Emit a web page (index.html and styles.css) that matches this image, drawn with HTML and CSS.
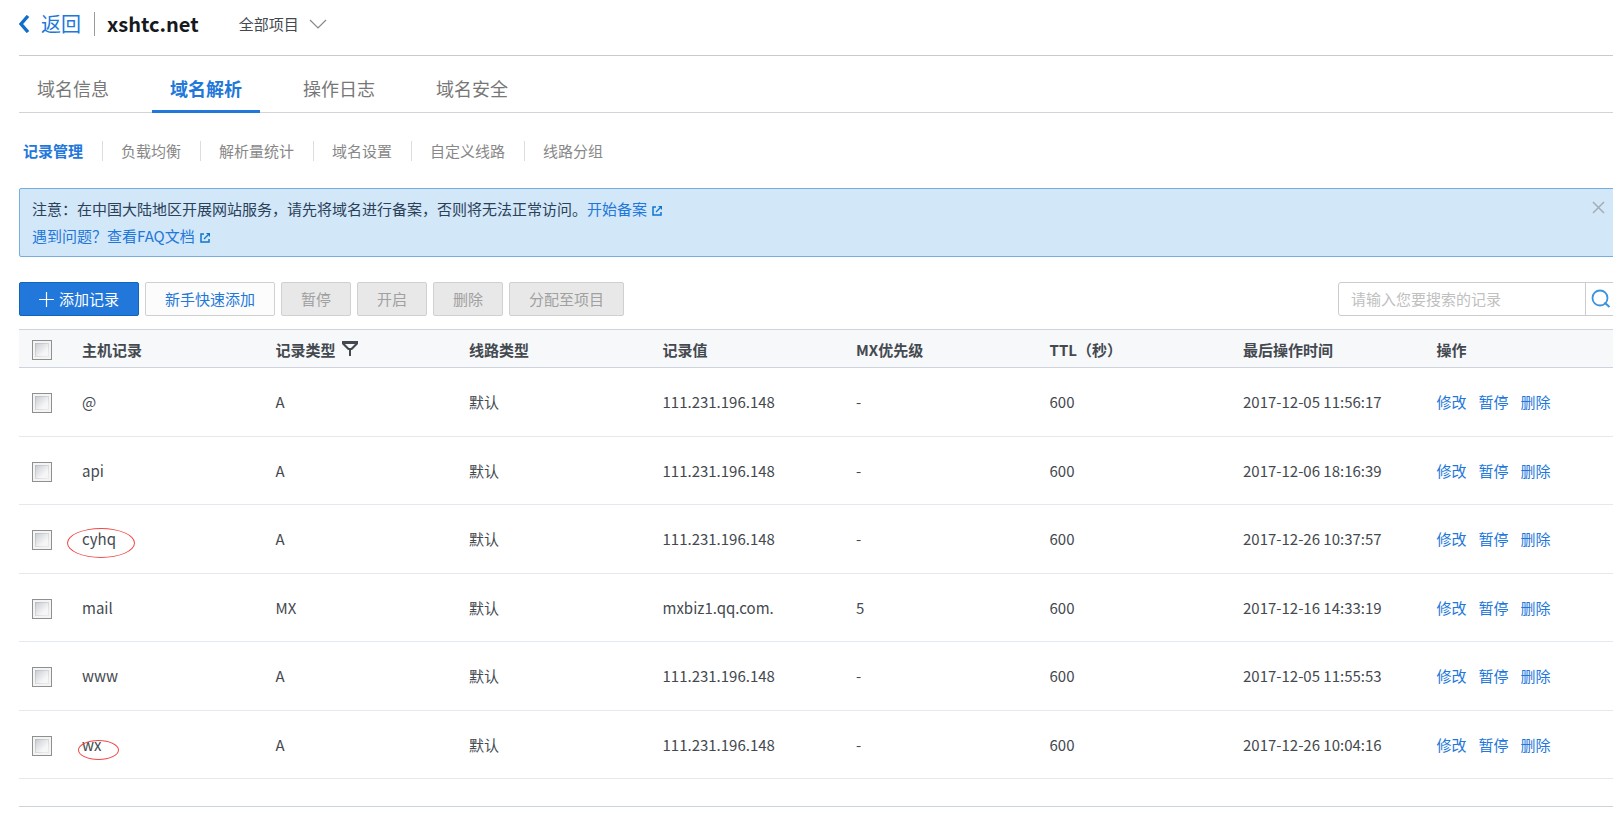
FILE: index.html
```html
<!DOCTYPE html>
<html lang="zh-CN">
<head>
    <meta charset="UTF-8">
    <meta name="viewport" content="width=device-width, initial-scale=1.0">
    <title>xshtc.net - 域名解析</title>
    <link rel="stylesheet" href="styles.css">
</head>
<body>
    <div class="page">
        <header class="header">
            <a href="#" class="back">
                <svg width="11" height="18" viewBox="0 0 11 18"><path d="M9 1L2 9l7 8" fill="none" stroke="#0f70cb" stroke-width="3.4"/></svg>
                返回
            </a>
            <h1>xshtc.net</h1>
            <button type="button" class="project">
                全部项目
                <svg width="18" height="10" viewBox="0 0 18 10"><path d="M1 1l8 8 8-8" fill="none" stroke="#888" stroke-width="1.2"/></svg>
            </button>
        </header>

        <nav class="tabs">
            <a href="#">域名信息</a>
            <a href="#" class="active">域名解析</a>
            <a href="#">操作日志</a>
            <a href="#">域名安全</a>
        </nav>

        <nav class="subnav">
            <a href="#" class="active">记录管理</a>
            <a href="#">负载均衡</a>
            <a href="#">解析量统计</a>
            <a href="#">域名设置</a>
            <a href="#">自定义线路</a>
            <a href="#">线路分组</a>
        </nav>

        <div class="notice">
            <div>
                <p>注意：在中国大陆地区开展网站服务，请先将域名进行备案，否则将无法正常访问。<a href="#">开始备案 <svg class="ext" width="10" height="10" viewBox="0 0 10 10"><path d="M4 1H1v8h8V6" fill="none" stroke="#0f76d0" stroke-width="1.5"/><path d="M6 0h4v4z" fill="#0f76d0"/><path d="M8 2L4 6" stroke="#0f76d0" stroke-width="1.2"/></svg></a></p>
                <p><a href="#">遇到问题？查看FAQ文档 <svg class="ext" width="10" height="10" viewBox="0 0 10 10"><path d="M4 1H1v8h8V6" fill="none" stroke="#0f76d0" stroke-width="1.5"/><path d="M6 0h4v4z" fill="#0f76d0"/><path d="M8 2L4 6" stroke="#0f76d0" stroke-width="1.2"/></svg></a></p>
            </div>
            <button type="button" class="close" aria-label="关闭">
                <svg width="13" height="13" viewBox="0 0 13 13"><path d="M1 1l11 11M12 1L1 12" fill="none" stroke="#a2adb6" stroke-width="1.5"/></svg>
            </button>
        </div>

        <div class="toolbar">
            <button type="button" class="btn primary">
                <svg width="15" height="15" viewBox="0 0 15 15"><path d="M7.5 0v15M0 7.5h15" fill="none" stroke="#fff" stroke-width="1.2"/></svg>
                添加记录
            </button>
            <button type="button" class="btn">新手快速添加</button>
            <button type="button" class="btn" disabled>暂停</button>
            <button type="button" class="btn" disabled>开启</button>
            <button type="button" class="btn" disabled>删除</button>
            <button type="button" class="btn" disabled>分配至项目</button>
            <form class="search">
                <input type="text" placeholder="请输入您要搜索的记录" aria-label="搜索记录">
                <button type="button" aria-label="搜索">
                    <svg width="20" height="20" viewBox="0 0 20 20"><circle cx="9" cy="9" r="7.5" fill="none" stroke="#3a93dc" stroke-width="1.8"/><path d="M13.5 13.5l5 4.5" stroke="#3a93dc" stroke-width="2"/></svg>
                </button>
            </form>
        </div>

        <table class="records">
            <thead>
                <tr>
                    <th class="check"><input type="checkbox" aria-label="全选"></th>
                    <th>主机记录</th>
                    <th>记录类型 <svg class="filter" width="16" height="15" viewBox="0 0 16 15"><path d="M0 0h16v3L10 9H6L0 3zM3 3l4 4h2l4-4z" fill="#444950" fill-rule="evenodd"/><path d="M8 8v7" stroke="#444950" stroke-width="2"/></svg></th>
                    <th>线路类型</th>
                    <th>记录值</th>
                    <th>MX优先级</th>
                    <th>TTL（秒）</th>
                    <th>最后操作时间</th>
                    <th>操作</th>
                </tr>
            </thead>
            <tbody>
                <tr>
                    <td class="check"><input type="checkbox" aria-label="@"></td>
                    <td>@</td>
                    <td>A</td>
                    <td>默认</td>
                    <td>111.231.196.148</td>
                    <td>-</td>
                    <td>600</td>
                    <td>2017-12-05 11:56:17</td>
                    <td class="ops"><a href="#">修改</a><a href="#">暂停</a><a href="#">删除</a></td>
                </tr>
                <tr>
                    <td class="check"><input type="checkbox" aria-label="api"></td>
                    <td>api</td>
                    <td>A</td>
                    <td>默认</td>
                    <td>111.231.196.148</td>
                    <td>-</td>
                    <td>600</td>
                    <td>2017-12-06 18:16:39</td>
                    <td class="ops"><a href="#">修改</a><a href="#">暂停</a><a href="#">删除</a></td>
                </tr>
                <tr>
                    <td class="check"><input type="checkbox" aria-label="cyhq"></td>
                    <td><span class="mark mark-large">cyhq</span></td>
                    <td>A</td>
                    <td>默认</td>
                    <td>111.231.196.148</td>
                    <td>-</td>
                    <td>600</td>
                    <td>2017-12-26 10:37:57</td>
                    <td class="ops"><a href="#">修改</a><a href="#">暂停</a><a href="#">删除</a></td>
                </tr>
                <tr>
                    <td class="check"><input type="checkbox" aria-label="mail"></td>
                    <td>mail</td>
                    <td>MX</td>
                    <td>默认</td>
                    <td>mxbiz1.qq.com.</td>
                    <td>5</td>
                    <td>600</td>
                    <td>2017-12-16 14:33:19</td>
                    <td class="ops"><a href="#">修改</a><a href="#">暂停</a><a href="#">删除</a></td>
                </tr>
                <tr>
                    <td class="check"><input type="checkbox" aria-label="www"></td>
                    <td>www</td>
                    <td>A</td>
                    <td>默认</td>
                    <td>111.231.196.148</td>
                    <td>-</td>
                    <td>600</td>
                    <td>2017-12-05 11:55:53</td>
                    <td class="ops"><a href="#">修改</a><a href="#">暂停</a><a href="#">删除</a></td>
                </tr>
                <tr>
                    <td class="check"><input type="checkbox" aria-label="wx"></td>
                    <td><span class="mark mark-small">wx</span></td>
                    <td>A</td>
                    <td>默认</td>
                    <td>111.231.196.148</td>
                    <td>-</td>
                    <td>600</td>
                    <td>2017-12-26 10:04:16</td>
                    <td class="ops"><a href="#">修改</a><a href="#">暂停</a><a href="#">删除</a></td>
                </tr>
            </tbody>
        </table>
        <div class="table-end"></div>
    </div>
</body>
</html>
```
FILE: styles.css
```css
* {
    box-sizing: border-box;
}

body {
    margin: 0;
    background-color: #fff;
    color: #444950;
    font-family: "Noto Sans CJK SC", sans-serif;
    font-size: 15px;
    line-height: 20px;
    overflow-x: hidden;
}

a {
    color: #2277da;
    text-decoration: none;
}

button, input {
    font: inherit;
    cursor: pointer;
}

button {
    padding: 0;
    border: none;
    background: none;
}

svg {
    flex: none;
}

.page {
    margin: 0 -7px 0 19px;
}

/* header */
.header {
    display: flex;
    align-items: center;
    height: 56px;
    padding-bottom: 7px;
    border-bottom: 1px solid #c8cace;
}

.back {
    display: flex;
    align-items: center;
    gap: 11px;
    height: 24px;
    padding-right: 13px;
    border-right: 1px solid #999;
    font-size: 20px;
}

.header h1 {
    margin: 0 40px 0 12px;
    color: #16191d;
    font-size: 20px;
}

.project {
    display: flex;
    align-items: center;
    gap: 10px;
    color: #444950;
}

/* tabs */
.tabs {
    display: flex;
    gap: 25px;
    height: 57px;
    border-bottom: 1px solid #d2d4da;
}

.tabs a {
    height: 57px;
    padding: 0 18px;
    color: #777;
    font-size: 18px;
    line-height: 64px;
}

.tabs .active {
    border-bottom: 3px solid #2277da;
    color: #2277da;
    font-weight: bold;
}

.subnav {
    display: flex;
    padding: 28px 0 27px 4px;
}

.subnav a {
    padding: 0 19px 0 18px;
    border-right: 1px solid #ddd;
    color: #888;
}

.subnav a:first-child {
    padding-left: 0;
}

.subnav a:last-child {
    border-right: none;
}

.subnav .active {
    color: #2277da;
    font-weight: bold;
}

/* notice */
.notice {
    display: flex;
    justify-content: space-between;
    align-items: flex-start;
    padding: 6px 14px 7px 12px;
    border: 1px solid #76aede;
    border-radius: 2px;
    background-color: #d2e7f8;
    color: #2b4158;
    line-height: 27px;
}

.notice p {
    margin: 0;
}

.ext {
    margin-left: 2px;
    vertical-align: -1px;
}

.close {
    display: flex;
    padding-top: 6px;
}

/* toolbar */
.toolbar {
    display: flex;
    gap: 6px;
    padding: 25px 0 13px;
}

.btn {
    display: flex;
    align-items: center;
    gap: 5px;
    height: 34px;
    padding: 0 19px;
    border: 1px solid #d0d0d0;
    border-radius: 2px;
    background-color: #fcfcfc;
    color: #2277da;
}

.btn.primary {
    border-color: #0f65b8;
    background-color: #2277da;
    color: #fff;
}

.btn:disabled {
    background-color: #e8e8e8;
    color: #a0a0a0;
    cursor: default;
}

.search {
    display: flex;
    width: 282px;
    height: 34px;
    margin-left: auto;
    border: 1px solid #ccc;
    border-radius: 3px;
}

.search input {
    flex: 1;
    min-width: 0;
    padding: 0 12px;
    border: none;
    background: none;
    outline: none;
}

.search input::placeholder {
    color: #c0c0c0;
}

.search button {
    display: flex;
    align-items: center;
    justify-content: center;
    width: 34px;
    padding-right: 3px;
    border-left: 1px solid #ccc;
}

/* records */
.records {
    width: 100%;
    border-collapse: separate;
    border-spacing: 0;
    table-layout: fixed;
}

.records th {
    height: 39px;
    padding: 2px 10px 0;
    border-top: 1px solid #cfd3de;
    border-bottom: 1px solid #cfd3de;
    background-color: #f6f8fa;
    text-align: left;
}

.records td {
    height: 69px;
    padding: 0 10px;
    border-bottom: 1px solid #e4e8ef;
}

.records tr:nth-child(even) td {
    height: 68px;
}

.records .check {
    width: 53px;
    padding: 2px 13px 0;
}

.records input {
    display: block;
    appearance: none;
    width: 20px;
    height: 20px;
    margin: 0;
    padding: 3px;
    border: 1px solid #8e8f8f;
    background:
        linear-gradient(135deg, #cbcfd5, #f6f6f6 70%) content-box,
        linear-gradient(135deg, #aeb3b9, #e9e9ea 75%);
    box-shadow: inset 0 0 0 2px #f4f4f4;
}

.filter {
    margin-left: 3px;
    vertical-align: 0;
}

.ops a {
    margin-right: 12px;
}

/* red circles around the records to check */
.mark {
    position: relative;
}

.mark::after {
    content: "";
    position: absolute;
    box-sizing: border-box;
    border: 1px solid #f04848;
    border-radius: 50%;
}

.mark-large::after {
    top: 0;
    left: -15px;
    width: 68px;
    height: 30px;
}

.mark-small::after {
    top: 6px;
    left: -4px;
    width: 41px;
    height: 20px;
}

.table-end {
    height: 28px;
    border-bottom: 1px solid #cdd4da;
}
```
